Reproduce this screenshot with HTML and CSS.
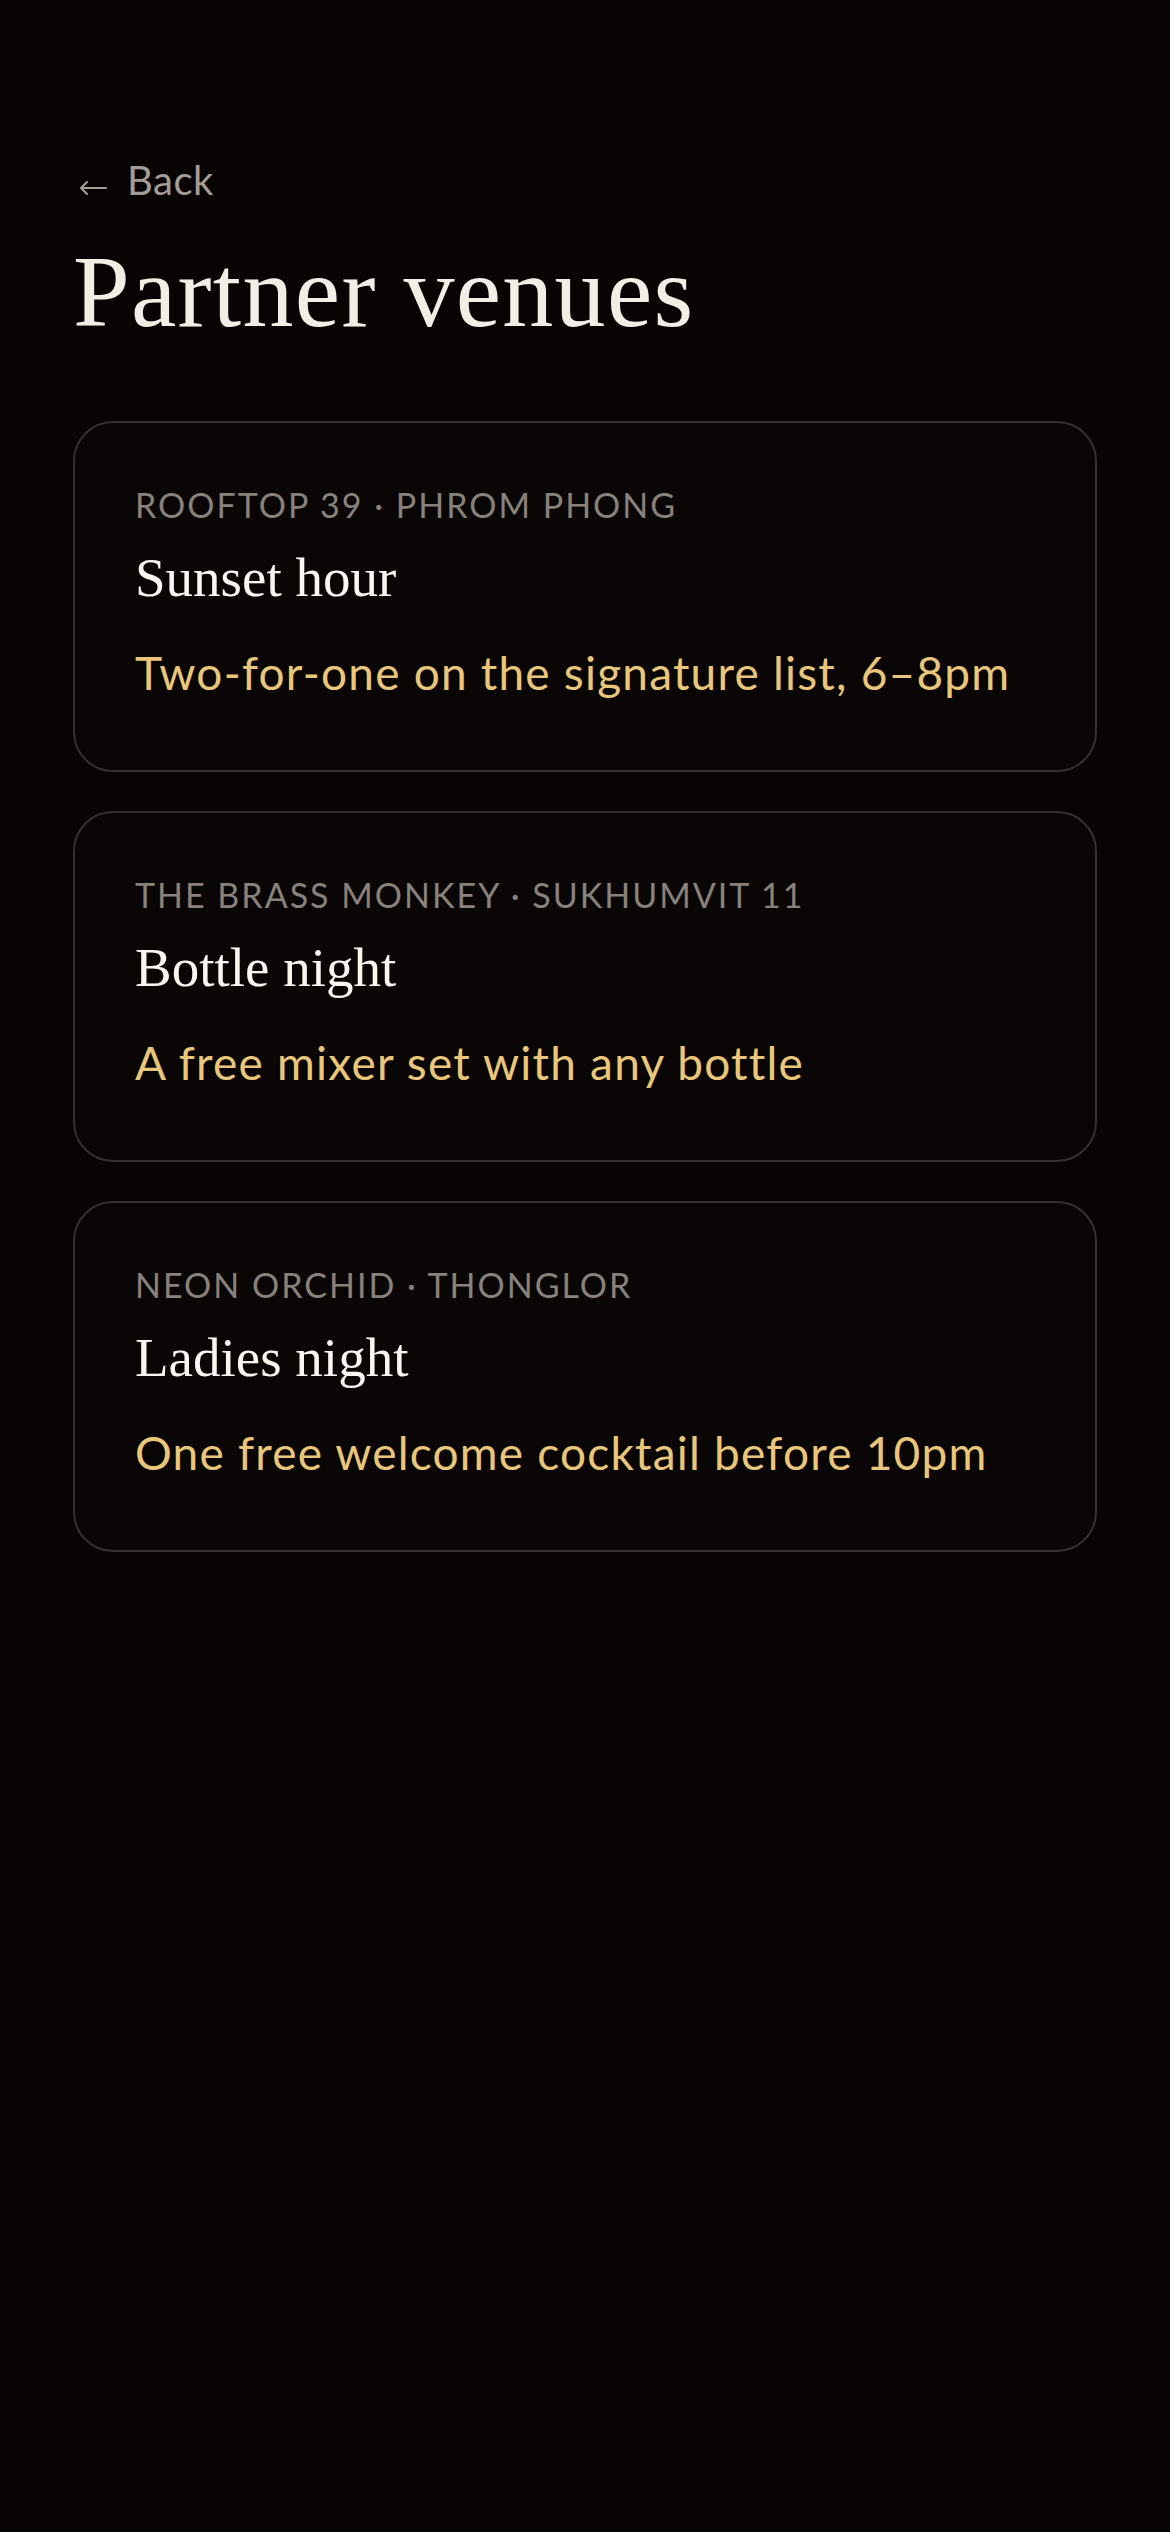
FILE: index.html
```html
<!DOCTYPE html>
<html lang="en">
<head>
    <meta charset="UTF-8">
    <meta name="viewport" content="width=device-width, initial-scale=1.0">
    <title>Partner venues</title>
    <link rel="stylesheet" href="styles.css">
</head>
<body>

    <a class="back" href="#">
        <svg class="back-arrow" width="28" height="14" viewBox="0 0 28 14" aria-hidden="true">
            <path d="M27 7H2M8 1L2 7l6 6" fill="none" stroke="currentColor" stroke-width="2" stroke-linecap="round" stroke-linejoin="round"/>
        </svg>
        <span>Back</span>
    </a>

    <h1>Partner venues</h1>

    <div class="venue-list">
        <div class="venue-card">
            <p class="venue-meta">Rooftop 39 · Phrom Phong</p>
            <h2>Sunset hour</h2>
            <p class="venue-offer">Two-for-one on the signature list, 6–8pm</p>
        </div>
        <div class="venue-card">
            <p class="venue-meta">The Brass Monkey · Sukhumvit 11</p>
            <h2>Bottle night</h2>
            <p class="venue-offer">A free mixer set with any bottle</p>
        </div>
        <div class="venue-card">
            <p class="venue-meta">Neon Orchid · Thonglor</p>
            <h2>Ladies night</h2>
            <p class="venue-offer">One free welcome cocktail before 10pm</p>
        </div>
    </div>

</body>
</html>
```

FILE: styles.css
```css
* {
    margin: 0;
    padding: 0;
    box-sizing: border-box;
}

html {
    background-color: #070403;
}

body {
    min-height: 100vh;
    padding: 156px 73px 80px;
    background-color: #070403;
    color: #f4efe6;
    font-family: Lato, "Liberation Sans", sans-serif;
}

.back {
    display: flex;
    align-items: center;
    gap: 20px;
    color: #a39d97;
    font-size: 40px;
    line-height: 48px;
    letter-spacing: 0.5px;
    text-decoration: none;
}

.back-arrow {
    margin-top: 16px;
    margin-left: 6px;
}

h1 {
    margin-top: 32px;
    font-family: "Liberation Serif", serif;
    font-size: 102px;
    line-height: 1.1;
    font-weight: 400;
    letter-spacing: 1.3px;
    color: #f3eee5;
}

.venue-list {
    margin-top: 73px;
    display: flex;
    flex-direction: column;
    gap: 39px;
}

.venue-card {
    padding: 62px 60px 70px;
    background-color: #090605;
    border: 2px solid #35312e;
    border-radius: 40px;
}

.venue-meta {
    font-size: 34px;
    line-height: 1.2;
    letter-spacing: 2px;
    text-transform: uppercase;
    color: #88827d;
}

.venue-card h2 {
    margin-top: 21px;
    font-family: "Liberation Serif", serif;
    font-size: 55px;
    line-height: 61px;
    font-weight: 400;
    color: #faf6ef;
}

.venue-offer {
    margin-top: 37px;
    font-size: 46px;
    line-height: 1.2;
    letter-spacing: 1.2px;
    color: #e8c67c;
}
```
